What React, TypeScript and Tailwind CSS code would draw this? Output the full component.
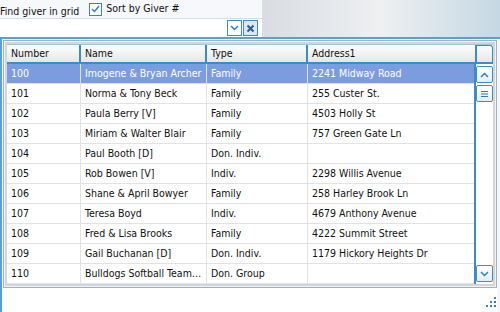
import React from "react";

type Giver = { num: string; name: string; type: string; addr: string };

const givers: Giver[] = [
  { num: "100", name: "Imogene & Bryan Archer", type: "Family", addr: "2241 Midway Road" },
  { num: "101", name: "Norma & Tony Beck", type: "Family", addr: "255 Custer St." },
  { num: "102", name: "Paula Berry [V]", type: "Family", addr: "4503 Holly St" },
  { num: "103", name: "Miriam & Walter Blair", type: "Family", addr: "757 Green Gate Ln" },
  { num: "104", name: "Paul Booth [D]", type: "Don. Indiv.", addr: "" },
  { num: "105", name: "Rob Bowen [V]", type: "Indiv.", addr: "2298 Willis Avenue" },
  { num: "106", name: "Shane & April Bowyer", type: "Family", addr: "258 Harley Brook Ln" },
  { num: "107", name: "Teresa Boyd", type: "Indiv.", addr: "4679 Anthony Avenue" },
  { num: "108", name: "Fred & Lisa Brooks", type: "Family", addr: "4222 Summit Street" },
  { num: "109", name: "Gail Buchanan [D]", type: "Don. Indiv.", addr: "1179 Hickory Heights Dr" },
  { num: "110", name: "Bulldogs Softball Team…", type: "Don. Group", addr: "" },
  { num: "", name: "", type: "", addr: "" },
];

const Chevron = ({ up }: { up?: boolean }) => (
  <svg width="9" height="6" viewBox="0 0 9 6">
    <path
      d={up ? "M1 5 L4.5 1.5 L8 5" : "M1 1 L4.5 4.5 L8 1"}
      fill="none"
      stroke="#2b7bbd"
      strokeWidth="1.4"
    />
  </svg>
);

const ScrollBtn = ({ children }: { children: React.ReactNode }) => (
  <div className="w-[17px] h-[17px] mx-auto rounded-[2px] border border-[#3c8cc6] bg-gradient-to-b from-white to-[#e6edf4] flex items-center justify-center">
    {children}
  </div>
);

const HeaderCell = ({ label, w }: { label: string; w: string }) => (
  <div className={`${w} h-full border-r-2 border-[#3a8ec8] pl-[4px] flex items-center`}>{label}</div>
);

export default function App() {
  return (
    <div
      className="w-[500px] h-[312px] overflow-hidden flex flex-col text-[10.5px] text-[#111]"
      style={{ fontFamily: "'DejaVu Sans Condensed', 'Liberation Sans', sans-serif" }}
    >
      {/* top strip */}
      <div className="h-[37px] flex">
        <div className="w-[262px] flex flex-col bg-[#f6f8fb]">
          <div className="h-[18px] flex items-center">
            <span className="mt-[5px]">Find giver in grid</span>
            <div className="ml-[10px] w-[13px] h-[13px] border border-[#3a82bf] bg-white flex items-center justify-center">
              <svg width="9" height="8" viewBox="0 0 9 8">
                <path d="M1 4 L3.5 6.5 L8 1" fill="none" stroke="#2b7bbd" strokeWidth="1.4" />
              </svg>
            </div>
            <span className="ml-[4px]">Sort by Giver #</span>
          </div>
          <div className="h-[19px] bg-white border-t border-[#d6dde6] flex items-center justify-end pr-[4px] gap-[1px]">
            <div className="w-[15px] h-[16px] border border-[#3c8cc6] bg-white flex items-center justify-center">
              <Chevron />
            </div>
            <div className="w-[15px] h-[16px] border border-[#3c8cc6] bg-[#dce7f1] flex items-center justify-center">
              <svg width="9" height="9" viewBox="0 0 9 9">
                <path d="M1.5 1.5 L7.5 7.5 M7.5 1.5 L1.5 7.5" stroke="#1f5f96" strokeWidth="2" />
              </svg>
            </div>
          </div>
        </div>
        <div className="flex-1 bg-gradient-to-r from-[#d9dde3] via-[#eef0f2] to-[#c6d8e3]" />
      </div>

      {/* panel */}
      <div className="flex-1 flex flex-col border-t-2 border-l-2 border-[#5aa0d8] bg-[#f5f7fa] pt-[1px] pl-[1px] pr-[3px]">
        <div className="h-[248px] border border-[#9fb0c0] p-[1px] bg-[#f0f2f5]">
          <div className="h-full border-2 border-[#d2d6db] bg-white flex flex-col overflow-hidden">
            {/* header */}
            <div className="h-[20px] flex border-b-2 border-[#3a8ec8] bg-gradient-to-b from-white to-[#e4e6e9] border-t border-t-[#9cc5e6]">
              <HeaderCell label="Number" w="w-[74px]" />
              <HeaderCell label="Name" w="w-[126px]" />
              <HeaderCell label="Type" w="w-[101px]" />
              <HeaderCell label="Address1" w="w-[169px]" />
              <div className="flex-1 rounded-tr-[3px] border border-[#3a8ec8] border-l-0 border-b-0" />
            </div>
            <div className="flex-1 flex overflow-hidden">
              <div className="w-[470px] flex flex-col">
                {givers.map((g, i) => {
                  const sel = i === 0;
                  return (
                    <div
                      key={i}
                      className={`h-[20px] shrink-0 flex border-b border-[#e2e2e2] ${
                        sel ? "bg-[#7c9ce0] text-white" : ""
                      }`}
                    >
                      <div className="w-[74px] border-r border-[#e2e2e2] pl-[4px] flex items-center">{g.num}</div>
                      <div className="w-[126px] border-r border-[#e2e2e2] pl-[4px] flex items-center whitespace-nowrap overflow-hidden">{g.name}</div>
                      <div className="w-[101px] border-r border-[#e2e2e2] pl-[4px] flex items-center">{g.type}</div>
                      <div className="flex-1 pl-[4px] flex items-center whitespace-nowrap">{g.addr}</div>
                    </div>
                  );
                })}
              </div>
              {/* scrollbar */}
              <div className="flex-1 border-l-2 border-[#3a8ec8] flex flex-col py-[2px] gap-[2px] bg-white">
                <ScrollBtn>
                  <Chevron up />
                </ScrollBtn>
                <ScrollBtn>
                  <svg width="7" height="6" viewBox="0 0 7 6">
                    <path d="M0 0.5 H7 M0 3 H7 M0 5.5 H7" stroke="#2b7bbd" strokeWidth="1" />
                  </svg>
                </ScrollBtn>
                <div className="flex-1" />
                <ScrollBtn>
                  <Chevron />
                </ScrollBtn>
              </div>
            </div>
          </div>
        </div>
        {/* footer */}
        <div className="flex-1 flex justify-end items-end pb-[5px] pr-[1px] bg-white">
          <svg width="10" height="10" viewBox="0 0 10 10">
            {[
              [8, 0],
              [4, 4],
              [8, 4],
              [0, 8],
              [4, 8],
              [8, 8],
            ].map(([x, y], k) => (
              <rect key={k} x={x} y={y} width="2" height="2" fill="#3c7fb8" />
            ))}
          </svg>
        </div>
      </div>
    </div>
  );
}
